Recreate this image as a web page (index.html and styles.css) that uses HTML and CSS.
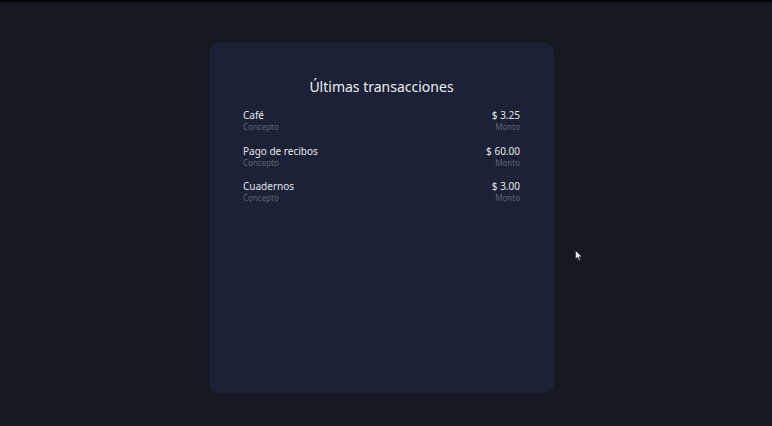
FILE: index.html
```html
<!DOCTYPE html>
<html lang="es">
<head>
<meta charset="utf-8">
<title>Últimas transacciones</title>
<link rel="stylesheet" href="styles.css">
</head>
<body>
<div class="topbar"></div>
<main class="page">
  <section class="card">
    <h1 class="title">Últimas transacciones</h1>
    <ul class="list">
      <li class="row">
        <div class="col">
          <span class="main">Café</span>
          <span class="sub">Concepto</span>
        </div>
        <div class="col right">
          <span class="main">$ 3.25</span>
          <span class="sub">Monto</span>
        </div>
      </li>
      <li class="row">
        <div class="col">
          <span class="main">Pago de recibos</span>
          <span class="sub">Concepto</span>
        </div>
        <div class="col right">
          <span class="main">$ 60.00</span>
          <span class="sub">Monto</span>
        </div>
      </li>
      <li class="row">
        <div class="col">
          <span class="main">Cuadernos</span>
          <span class="sub">Concepto</span>
        </div>
        <div class="col right">
          <span class="main">$ 3.00</span>
          <span class="sub">Monto</span>
        </div>
      </li>
    </ul>
  </section>
</main>
<svg class="cursor" width="8" height="12" viewBox="0 0 8 12"><path d="M0.5 0.5 L0.5 9 L2.6 7.2 L4 10.5 L5.3 10 L4 6.8 L7 6.8 Z" fill="#e8e8ee" stroke="#222" stroke-width="0.6"/></svg>
</body>
</html>
```
FILE: styles.css
```css
html, body {
  margin: 0;
  padding: 0;
}
body {
  background: #151922;
  font-family: "Noto Sans", "Open Sans", sans-serif;
  color: #e7e9ef;
  height: 426px;
  overflow: hidden;
  position: relative;
}
.topbar {
  height: 2px;
  background: #050608;
}
.page {
  display: flex;
  justify-content: center;
  padding-top: 41px;
  padding-right: 9px;
}
.card {
  width: 345px;
  height: 350px;
  box-sizing: border-box;
  background: #1c2135;
  border-radius: 10px;
  padding: 33px 34px 0;
}
.title {
  margin: 0 0 11px;
  text-align: center;
  font-weight: 400;
  font-size: 14px;
  line-height: 22px;
  color: #eceef3;
}
.list {
  list-style: none;
  margin: 0;
  padding: 0;
  display: flex;
  flex-direction: column;
  gap: 12.5px;
}
.row {
  display: flex;
  justify-content: space-between;
}
.col {
  display: flex;
  flex-direction: column;
}
.col.right {
  align-items: flex-end;
}
.main {
  font-size: 10px;
  line-height: 12px;
  color: #e4e6ec;
}
.sub {
  font-size: 8px;
  line-height: 11px;
  color: #5d6475;
}
.cursor {
  position: absolute;
  left: 575px;
  top: 250px;
}
```
